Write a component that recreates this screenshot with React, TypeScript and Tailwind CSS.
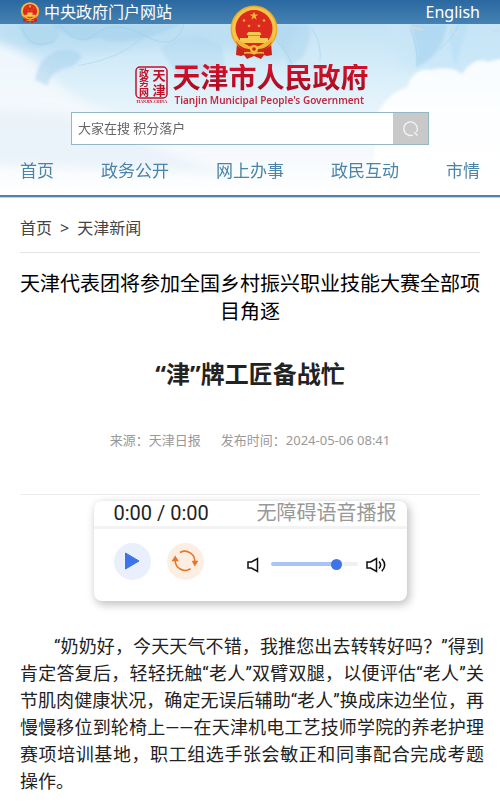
import { useState } from "react";

const navItems = ["首页", "政务公开", "网上办事", "政民互动", "市情"];

function Star({ x, y, r }: { x: number; y: number; r: number }) {
  return (
    <path
      d="M0-10 2.4-3.2 9.5-3.1 3.8 1.2 5.9 8.1 0 4-5.9 8.1-3.8 1.2-9.5-3.1-2.4-3.2Z"
      transform={`translate(${x} ${y}) scale(${r / 10})`}
      fill="#f5b92e"
    />
  );
}

function Emblem({ className }: { className?: string }) {
  return (
    <svg viewBox="0 0 48 54" className={className} aria-hidden="true">
      <path d="M7 38 6 50l5 1 3-1 3 4 7-3 7 3 3-4 3 1 5-1-1-12Z" fill="#c9231b" />
      <circle cx="24" cy="24" r="23.500" fill="#e9a92c" />
      <circle cx="24" cy="24" r="22" fill="#f6c548" />
      <circle cx="24" cy="23.500" r="18.500" fill="#dc2a1e" />
      <Star x={24} y={11} r={4.5} />
      <Star x={14} y={15.5} r={2} />
      <Star x={34} y={15.5} r={2} />
      <Star x={19} y={21} r={2} />
      <Star x={29} y={21} r={2} />
      <path d="M18 27h12l1.500 3h-15Zm0 3.500h12V33h8v5H10v-5h8Z" fill="#f7ca4f" />
      <path d="M6 36c5 1 9 5 13 8l5-1 5 1c4-3 8-7 13-8-2 6-7 10-13 11H19C13 46 8 42 6 36Z" fill="#cf261c" />
      <path d="M5 35c6 0 11 5 16 7h6c5-2 10-7 16-7-4 6-9 9-15 9h-8C14 44 9 41 5 35Z" fill="#f2b637" />
      <circle cx="24" cy="44" r="4" fill="#f4bd3c" />
      <circle cx="24" cy="44" r="1.800" fill="#cb241b" />
      <path d="M14 48c4 0 7-1 10 1 3-2 6-1 10-1" fill="none" stroke="#f4bd3c" strokeWidth="1.500" />
    </svg>
  );
}

// watercolour sky behind the masthead
function Sky() {
  return (
    <svg
      viewBox="0 0 500 172"
      preserveAspectRatio="none"
      className="absolute inset-0 h-full w-full"
      aria-hidden="true"
    >
      <defs>
        <linearGradient id="sky" x1="0" y1="0" x2="0" y2="1">
          <stop offset="0" stopColor="#c4e3f5" />
          <stop offset="0.35" stopColor="#dcf0fa" />
          <stop offset="0.62" stopColor="#f0f7fc" />
          <stop offset="0.88" stopColor="#fafcfe" />
          <stop offset="1" stopColor="#ffffff" />
        </linearGradient>
        <filter id="soft" x="-20%" y="-20%" width="140%" height="140%">
          <feGaussianBlur stdDeviation="1.500" />
        </filter>
        <filter id="cloud" x="-20%" y="-20%" width="140%" height="140%">
          <feGaussianBlur stdDeviation="5" />
        </filter>
      </defs>
      <rect width="500" height="172" fill="url(#sky)" />
      <g filter="url(#cloud)">
        <path d="M0 20Q60 35 140 25T280 40L300 0H0Z" fill="#b5daf1" opacity=".6" />
        <path d="M-20 16Q20 20 50 52T130 95L80 120-20 105Z" fill="#f6fafd" opacity=".8" />
        <path d="M-20 88Q70 80 130 112T240 150L-20 140Z" fill="#e6f0f8" opacity=".7" />
        <path d="M380-10H520V50Q440 60 400 40Z" fill="#c7e5f8" opacity=".7" />
      </g>
      <g filter="url(#soft)">
        <path d="M18 0Q25 24 43 22 62 20 60 0Z" fill="#a9d3ec" opacity=".5" />
        <path d="M35 56Q40 27 67 26 92 29 72 43 50 46 48 62Z" fill="#9dcdea" opacity=".45" />
        <path d="M52 0Q75 22 98 14 130 25 182 0Z" fill="#a0cfeb" opacity=".5" />
        <path d="M160 25Q190 0 222 22L225 45 180 55Z" fill="#b0d8ef" opacity=".45" />
        <path d="M260 0Q282 14 288 43L303 34Q314 8 308 0Z" fill="#a4d1ec" opacity=".4" />
        <path d="M410 0Q418 20 417 43 443 31 447 0Z" fill="#9ed0ef" opacity=".55" />
        <path d="M450 0Q449 25 455 42L468 0Z" fill="#b5ddf5" opacity=".6" />
        <path d="M378 88Q390 68 407 64 414 43 431 46 451 42 462 50 474 32 488 38 492 36 510 34V172H370Z" fill="#ffffff" opacity=".85" />
      </g>
      <g fill="none" stroke="#86bfe3" opacity=".3">
        <path d="M22 4Q30 28 55 17M60 0Q78 25 96 10T145 12 184 0" />
        <path d="M78 42Q120 35 142 14M265 8Q285 20 292 40M312 4Q322 20 320 38" />
        <path d="M410 5Q418 22 417 43M440 25Q455 12 459 0" />
      </g>
      <path d="M410 3 423 6M450 4 456 10M493 8 498 6" stroke="#d9ddce" strokeWidth="2" opacity=".8" />
    </svg>
  );
}

function Seal() {
  return (
    <svg
      viewBox="0 0 33 39"
      className="h-[39px] w-[33px] overflow-visible"
      role="img"
      aria-label="天津政务网"
    >
      <rect x="1" y="1" width="31" height="31" rx="4" fill="none" stroke="#c4122a" strokeWidth="1.500" />
      <g
        fill="#c4122a"
        fontWeight="700"
        fontFamily="'Noto Sans CJK SC', sans-serif"
        textAnchor="middle"
      >
        <text x="24" y="14" fontSize="13">天</text>
        <text x="24" y="29" fontSize="13">津</text>
        <text x="9" y="11" fontSize="10">政</text>
        <text x="9" y="20" fontSize="10">务</text>
        <text x="9" y="30" fontSize="10">网</text>
      </g>
      <text
        x="16.500"
        y="37"
        fontSize="4"
        fontWeight="700"
        textAnchor="middle"
        fill="#b3142b"
        fontFamily="'Liberation Serif', serif"
      >
        TIANJIN-CHINA
      </text>
    </svg>
  );
}

function Header() {
  return (
    <header className="relative border-b-2 border-[#4f83a5] shadow-[0_1px_0_#b9d8ea]">
      <div className="flex h-6 items-center justify-between bg-linear-to-b from-[#2a68a1] to-[#4582b2] px-5 font-['Noto_Sans','Noto_Sans_CJK_SC',sans-serif] text-base leading-6 text-white">
        <a href="#" className="flex items-center gap-1">
          <Emblem className="h-[21px] w-5" />
          中央政府门户网站
        </a>
        <a href="#">English</a>
      </div>

      <div className="relative">
        <Sky />
        <div className="relative pt-10">
          <a href="#" className="flex items-center justify-center gap-1 pl-1">
            <Seal />
            <span className="flex flex-col">
              <span className="bg-linear-to-b from-[#d8102a] to-[#a30c1e] bg-clip-text text-[28px] leading-[30px] font-bold text-transparent">
                天津市人民政府
              </span>
              <span className="pl-0.5 font-['Noto_Sans',sans-serif] text-[10px] leading-3 font-semibold text-[#c02a43]">
                Tianjin Municipal People's Government
              </span>
            </span>
          </a>

          <form
            className="mx-[71px] mt-1.5 flex h-[33px] border border-[#93b7c4] bg-white"
            onSubmit={(e) => e.preventDefault()}
          >
            <input
              type="text"
              aria-label="搜索"
              placeholder="大家在搜 积分落户"
              className="min-w-0 flex-1 px-1.5 text-[13px] outline-none placeholder:text-[#666]"
            />
            <button
              type="submit"
              aria-label="搜索"
              className="flex w-[35px] items-center justify-center bg-[#c9c9c9]"
            >
              <svg viewBox="0 0 18 18" className="size-[18px]" fill="none" stroke="#f4f4f4" strokeWidth="1.300">
                <path d="M11 15A6.800 6.800 0 1 1 14.500 12" />
                <path d="m12 12 3.500 3.500" />
              </svg>
            </button>
          </form>

          <nav className="flex justify-between px-5 pt-[14px] pb-3 text-[17px] leading-6 text-[#4a84a8]">
            {navItems.map((item) => (
              <a key={item} href="#">
                {item}
              </a>
            ))}
          </nav>
        </div>
      </div>

      <Emblem className="absolute top-[5px] left-1/2 ml-1 h-[54px] w-12 -translate-x-1/2" />
    </header>
  );
}

function AudioPlayer() {
  const [volume, setVolume] = useState(79);

  return (
    <section className="mx-auto mt-1.5 w-[313px] rounded-lg bg-white shadow-[2px_3px_8px_1px_#c4c4c4]">
      <div className="flex h-7 justify-between border-b-3 border-[#f3f3f3] pr-2.5 pl-5 text-xl leading-6">
        <span className="text-[#222]">0:00 / 0:00</span>
        <span className="text-[#999]">无障碍语音播报</span>
      </div>
      <div className="flex h-18 items-center pb-2 pl-5">
        <button
          type="button"
          aria-label="播放"
          className="flex size-[37px] items-center justify-center rounded-full bg-[#e9effd]"
        >
          <svg viewBox="0 0 16 18" className="h-[18px] w-4">
            <path d="M1.500 1 15 9 1.500 17Z" fill="#3d74e8" stroke="#3d74e8" strokeLinejoin="round" />
          </svg>
        </button>
        <button
          type="button"
          aria-label="重新播放"
          className="ml-4 flex size-[37px] items-center justify-center rounded-full bg-[#fdeee4]"
        >
          <svg viewBox="0 0 26 22" className="h-[22px] w-[26px]" fill="none" stroke="#ec7424" strokeWidth="1.600">
            <path d="M8 2.500A10 10 0 0 1 22.800 12" />
            <path d="M18.500 18.800A10 10 0 0 1 3.200 10" />
            <path d="M21 11.500h4L22.800 15ZM1 10.500H5.400L3.200 7Z" fill="#ec7424" />
          </svg>
        </button>
        <svg viewBox="0 0 12 16" className="mt-2 ml-[43px] h-4 w-3" fill="none" stroke="#111" strokeWidth="1.500">
          <path d="M1 5h3.500L10.500 1.500v13L4.500 11H1Z" />
        </svg>
        <input
          type="range"
          min={0}
          max={100}
          value={volume}
          onChange={(e) => setVolume(Number(e.target.value))}
          aria-label="音量"
          style={{
            backgroundImage: `linear-gradient(to right, #a9c4f5 ${volume}%, #f0f0f0 ${volume}%)`,
          }}
          className="mt-1.5 ml-3 h-1 w-[87px] appearance-none rounded-full [&::-webkit-slider-thumb]:size-[11px] [&::-webkit-slider-thumb]:appearance-none [&::-webkit-slider-thumb]:rounded-full [&::-webkit-slider-thumb]:bg-[#3d74e8]"
        />
        <svg viewBox="0 0 21 16" className="mt-2 ml-2 h-4 w-[21px]" fill="none" stroke="#111" strokeWidth="1.500">
          <path d="M1 5h3.500L10.500 1.500v13L4.500 11H1Z" />
          <path d="M13 4.500q3.200 3.500 0 7M15.800 1.800q5.800 6.200 0 12.400" />
        </svg>
      </div>
    </section>
  );
}

export default function App() {
  return (
    <div
      lang="zh-CN"
      className="min-h-screen bg-white font-[Roboto,'Noto_Sans_CJK_SC',sans-serif] text-[#222]"
    >
      <Header />

      <main className="px-5 pb-2">
        <nav
          aria-label="面包屑"
          className="flex gap-2 border-b border-[#e4e4e4] pt-[19px] pb-3 font-['Noto_Sans','Noto_Sans_CJK_SC',sans-serif] text-base leading-6 text-[#444]"
        >
          <a href="#">首页</a>
          <span>&gt;</span>
          <a href="#">天津新闻</a>
        </nav>

        <article>
          <p className="pt-[17px] text-center text-xl leading-7 text-black">
            天津代表团将参加全国乡村振兴职业技能大赛全部项目角逐
          </p>
          <h1 className="pt-8 text-center font-['Noto_Sans','Noto_Sans_CJK_SC',sans-serif] text-2xl leading-8 font-bold">
            “津”牌工匠备战忙
          </h1>
          <div className="flex justify-center gap-5 border-b border-[#ececec] pt-10 pb-11 font-['Noto_Sans','Noto_Sans_CJK_SC',sans-serif] text-[13px] leading-5 text-[#999]">
            <span>来源：天津日报</span>
            <span>发布时间：2024-05-06 08:41</span>
          </div>

          <AudioPlayer />

          <p className="mt-8 -mr-1 text-justify indent-[34px] text-lg leading-[27px]">
            “奶奶好，今天天气不错，我推您出去转转好吗？”得到肯定答复后，轻轻抚触“老人”双臂双腿，以便评估“老人”关节肌肉健康状况，确定无误后辅助“老人”换成床边坐位，再慢慢移位到轮椅上——在天津机电工艺技师学院的养老护理赛项培训基地，职工组选手张会敏正和同事配合完成考题操作。
          </p>
        </article>
      </main>
    </div>
  );
}
